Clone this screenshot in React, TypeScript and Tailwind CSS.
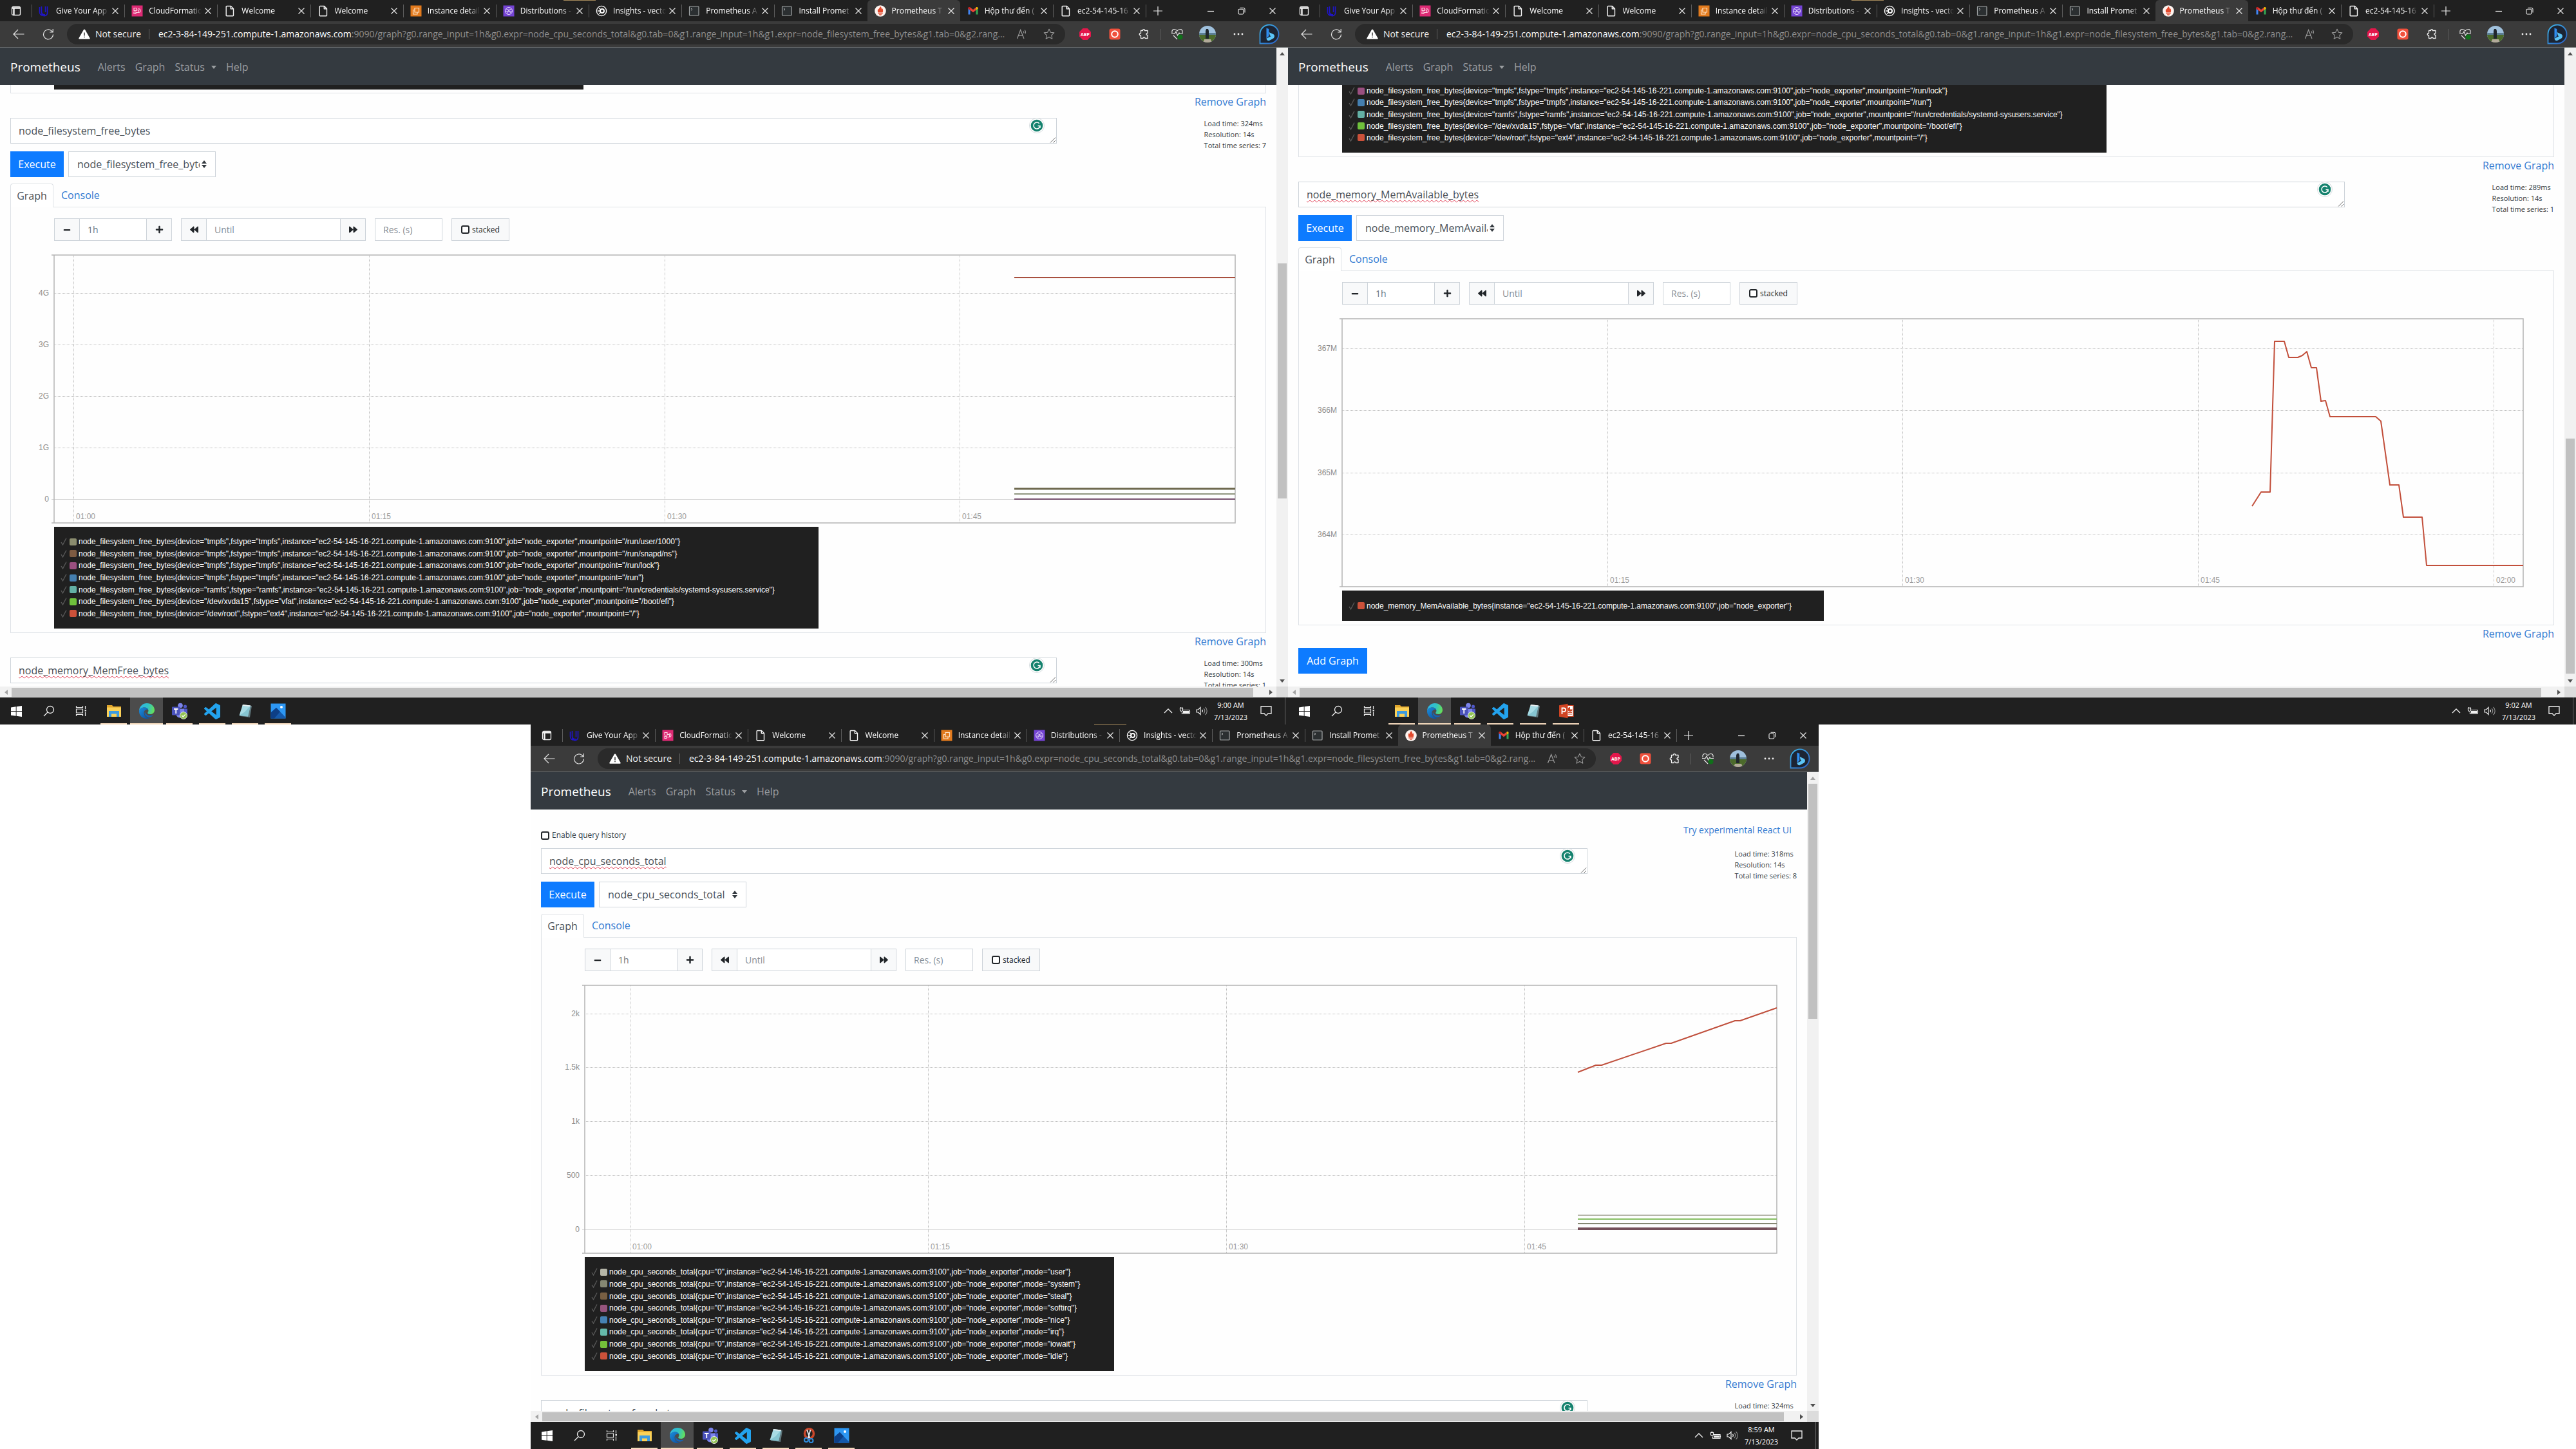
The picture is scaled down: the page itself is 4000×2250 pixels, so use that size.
import { useId } from "react";
import type { ReactNode } from "react";
import { FaBackward, FaForward, FaMinus, FaPlus } from "react-icons/fa";

/* ---------- favicons ---------- */

const UdacityIcon = () => (
  <svg viewBox="0 0 18 18" className="size-[18px]" fill="none" stroke="#2015c8" strokeWidth="1.6">
    <path d="M4.5 2v8.500a4.500 4.500 0 0 0 5.500 4.300M13.500 2v9a4.500 4.500 0 0 1-9 2M1.500 3v7.500c0 3 2 5.500 5 5.500M10.500 2v9" />
  </svg>
);

const CloudFormationIcon = () => (
  <svg viewBox="0 0 18 18" className="size-[18px]" fill="none">
    <rect x="0.500" y="0.500" width="17" height="17" fill="#dd2a74" />
    <path d="M4 4.500h4v4H4zM4 10.500h3v3H4zM8 7.500h3.500v4H7.500M10.500 5.500c2.500 0 3.500 1.500 3.500 3.500s-1.500 2.500-3 2.500" stroke="#fbd3e2" strokeWidth="1.100" />
  </svg>
);

const PageIcon = () => (
  <svg viewBox="0 0 18 18" className="size-[18px]" fill="none" stroke="#f4f4f4" strokeWidth="1.400" strokeLinejoin="round">
    <path d="M4 1.500h6.500l4 4V16a.8.8 0 0 1-.8.8H4a.8.8 0 0 1-.8-.8V2.300a.8.8 0 0 1 .8-.8zM10.300 1.700v4.100h4" />
  </svg>
);

const Ec2Icon = () => (
  <svg viewBox="0 0 18 18" className="size-[18px]" fill="none">
    <rect x="0.500" y="0.500" width="17" height="17" fill="#e27a1d" />
    <path d="M7 4.500h6.500V11H7zM7 7.500H4.500V14H11v-3" stroke="#fde3c8" strokeWidth="1.200" />
  </svg>
);

const CloudFrontIcon = () => (
  <svg viewBox="0 0 18 18" className="size-[18px]" fill="none">
    <rect x="0.500" y="0.500" width="17" height="17" fill="#7443d4" />
    <circle cx="9" cy="9" r="5.500" stroke="#e6dafb" />
    <path d="M5 6l4 1.500L13 6M9 7.500 6.500 13M9 7.500l3 5M4 10h10" stroke="#e6dafb" strokeWidth="0.900" />
  </svg>
);

const InsightsIcon = () => (
  <svg viewBox="0 0 18 18" className="size-[18px]" fill="none" stroke="#fff">
    <circle cx="9" cy="9" r="7.600" strokeWidth="1.300" />
    <circle cx="10" cy="9" r="3" strokeWidth="2" />
    <path d="M3 9h4M5 4.500l3 2.500M5 13.500 8 11" strokeWidth="1.300" />
  </svg>
);

const TerminalIcon = () => (
  <svg viewBox="0 0 18 18" className="size-[18px]" fill="none">
    <rect x="1.500" y="2" width="14.500" height="14" rx="1" fill="#2b2f31" stroke="#a5a9aa" strokeWidth="1.200" />
    <path d="M4 5l2 1.600L4 8.200" stroke="#d6d6d6" strokeWidth="0.900" />
  </svg>
);

const PrometheusIcon = () => (
  <svg viewBox="0 0 18 18" className="size-[18px]">
    <circle cx="9" cy="9" r="8.800" fill="#fdf3ef" />
    <path d="M9 1.800c1.500 2 2.400 3 2.200 4.800 1-.4 1-1 1.100-1.500 1 2 1.300 4.500.2 6.400h-7c-1.100-2-.8-4.300.2-6.200.1.800.5 1.200 1 1.500C6.500 4.800 8.500 4 9 1.800z" fill="#e2492c" />
    <path d="M5.300 12.200h7.400v1.300H5.300zM6.800 14.200h4.400c-.4 1-1.200 1.500-2.200 1.500s-1.800-.5-2.200-1.500z" fill="#e2492c" />
  </svg>
);

const GmailIcon = () => (
  <svg viewBox="0 0 18 18" className="size-[18px]">
    <path d="M1.500 4.500v10h3V8z" fill="#4285f4" />
    <path d="M16.500 4.500v10h-3V8z" fill="#34a853" />
    <path d="M1.500 4.700c0-1.600 1.700-2.200 3-1.200L9 7l4.500-3.500v4.300L9 11.200 4.500 7.800 1.500 5.600z" fill="#ea4335" />
    <path d="M13.500 3.500c1.300-1 3-.4 3 1.200v1l-3 2.100z" fill="#fbbc04" />
    <path d="M1.500 4.700c0-1.600 1.700-2.200 3-1.200v4.300L1.500 5.700z" fill="#c5221f" />
  </svg>
);

const CloseIcon = ({ className = "size-3" }: { className?: string }) => (
  <svg viewBox="0 0 12 12" className={className} fill="none" stroke="#e6e6e6" strokeWidth="1.200">
    <path d="M1.500 1.500l9 9M10.500 1.500l-9 9" />
  </svg>
);

/* ---------- browser chrome ---------- */

type TabInfo = { title: string; icon: () => ReactNode; active?: boolean; divider?: boolean };

const browserTabs: TabInfo[] = [
  { title: "Give Your App", icon: UdacityIcon, divider: true },
  { title: "CloudFormatio", icon: CloudFormationIcon, divider: true },
  { title: "Welcome", icon: PageIcon, divider: true },
  { title: "Welcome", icon: PageIcon, divider: true },
  { title: "Instance detail", icon: Ec2Icon, divider: true },
  { title: "Distributions -", icon: CloudFrontIcon, divider: true },
  { title: "Insights - vecto", icon: InsightsIcon, divider: true },
  { title: "Prometheus A", icon: TerminalIcon, divider: true },
  { title: "Install Promet", icon: TerminalIcon, divider: true },
  { title: "Prometheus T", icon: PrometheusIcon, active: true },
  { title: "Hộp thư đến (", icon: GmailIcon },
  { title: "ec2-54-145-16", icon: PageIcon, divider: true },
];

function TabStrip() {
  return (
    <div className="relative flex h-[33px] shrink-0 items-stretch bg-[#202020] text-white">
      <div className="absolute left-[43.75%] top-0 h-px w-[50px] bg-[#a68a5b]" />
      <button aria-label="Tab actions" className="flex w-[49px] items-center justify-center">
        <svg viewBox="0 0 16 16" className="size-4" fill="none" stroke="#f2f2f2" strokeWidth="1.300">
          <rect x="1.500" y="1.500" width="13" height="13" rx="2" />
          <path d="M1.500 3.500h13M4.500 4v10.500" strokeWidth="2.400" />
        </svg>
      </button>
      <div className="flex min-w-0 flex-1">
        {browserTabs.map((tab, i) => (
          <div
            key={i}
            className={`relative flex min-w-0 flex-1 items-center pl-[11px] pr-2 ${tab.active ? "rounded-t-md bg-[#3b3b3b]" : ""}`}
          >
            {tab.divider && <span className="absolute left-0 top-[7px] h-5 w-px bg-[#5c5c5c]" />}
            <span className="shrink-0">{tab.icon()}</span>
            <span className="ml-[9px] min-w-0 flex-1 overflow-hidden whitespace-nowrap text-[12px] leading-4 [mask-image:linear-gradient(to_right,black_80%,transparent)]">
              {tab.title}
            </span>
            <button aria-label="Close tab" className="ml-1 shrink-0">
              <CloseIcon />
            </button>
          </div>
        ))}
      </div>
      <div className="flex w-[221px] items-center">
        <span className="h-5 w-px bg-[#5c5c5c]" />
        <button aria-label="New tab" className="ml-2.5">
          <svg viewBox="0 0 16 16" className="size-4" stroke="#eee" strokeWidth="1.200">
            <path d="M8 1v14M1 8h14" />
          </svg>
        </button>
        <div className="ml-auto flex">
          <button aria-label="Minimize" className="flex w-12 justify-center">
            <svg viewBox="0 0 12 12" className="size-3" stroke="#eee" strokeWidth="1.200">
              <path d="M1 6.500h10" />
            </svg>
          </button>
          <button aria-label="Restore" className="flex w-12 justify-center">
            <svg viewBox="0 0 12 12" className="size-3" fill="none" stroke="#eee" strokeWidth="1.100">
              <rect x="1" y="3.200" width="7.800" height="7.800" rx="1.500" />
              <path d="M3.500 1.200h5.300a2.200 2.200 0 0 1 2.200 2.200v5" />
            </svg>
          </button>
          <button aria-label="Close window" className="flex w-12 justify-center">
            <CloseIcon />
          </button>
        </div>
      </div>
    </div>
  );
}

const cell = "flex items-center justify-center";

function AddressBar() {
  const id = useId();
  return (
    <div className="flex h-[41px] shrink-0 items-center border-b border-[#6b6f70] bg-[#3b3b3b]">
      <button aria-label="Back" className="ml-[19px]">
        <svg viewBox="0 0 20 20" className="size-5" fill="none" stroke="#e4e4e4" strokeWidth="1.200">
          <path d="M18.500 10H2M9 3 2 10l7 7" />
        </svg>
      </button>
      <button aria-label="Refresh" className="ml-[26px]">
        <svg viewBox="0 0 20 20" className="size-5" fill="none" stroke="#e4e4e4" strokeWidth="1.200">
          <path d="M17.500 10.500A7.500 7.500 0 1 1 14.500 4.500L17 7M17.200 2v5h-5" />
        </svg>
      </button>
      <div className="ml-[19px] flex h-8 min-w-0 flex-1 items-center rounded-full bg-[#2a2a2a] pl-[18px] pr-4 text-[14px] leading-5">
        <svg viewBox="0 0 18 16" className="h-4 w-[18px] shrink-0">
          <path d="M9 .5c.5 0 .8.200 1 .6l7.600 13.200c.4.700 0 1.400-.8 1.400H1.200c-.8 0-1.200-.7-.8-1.400L8 1.100c.2-.4.500-.6 1-.6z" fill="#fff" />
          <path d="M8.300 5.500h1.400v5H8.300zM8.300 11.800h1.400v1.500H8.300z" fill="#2a2a2a" />
        </svg>
        <span className="ml-2 shrink-0 text-[#f1f1f1]">Not secure</span>
        <span className="ml-3 h-4 w-px shrink-0 bg-[#606060]" />
        <span className="ml-3.5 min-w-0 flex-1 overflow-hidden whitespace-nowrap text-[#8f8f8f]">
          <span className="text-white">ec2-3-84-149-251.compute-1.amazonaws.com</span>
          :9090/graph?g0.range_input=1h&g0.expr=node_cpu_seconds_total&g0.tab=0&g1.range_input=1h&g1.expr=node_filesystem_free_bytes&g1.tab=0&g2.rang...
        </span>
        <button aria-label="Read aloud" className="ml-3 shrink-0">
          <svg viewBox="0 0 18 18" className="size-[18px]" fill="none" stroke="#9a9a9a" strokeWidth="1.200">
            <path d="M1.500 16 6.700 2.500 12 16M3.300 11.500h6.800M11 4.500a4 4 0 0 1 .8 3M13.300 2.500a6.500 6.500 0 0 1 1 5.500" />
          </svg>
        </button>
        <button aria-label="Add to favorites" className="ml-6 shrink-0">
          <svg viewBox="0 0 18 18" className="size-[18px]" fill="none" stroke="#9a9a9a" strokeWidth="1.100" strokeLinejoin="round">
            <path d="M9 1.200l2.400 5 5.400.700-4 3.800 1 5.500L9 13.600l-4.800 2.600 1-5.500-4-3.800 5.400-.7z" />
          </svg>
        </button>
      </div>
      <div className="ml-2 mr-[5px] flex items-center">
        <button aria-label="Adblock Plus" className={`${cell} w-[46px]`}>
          <span className="flex size-[18px] items-center justify-center bg-[#e3174b] text-[7px] font-bold leading-none text-white [clip-path:polygon(30%_0,70%_0,100%_30%,100%_70%,70%_100%,30%_100%,0_70%,0_30%)]">
            ABP
          </span>
        </button>
        <button aria-label="Extension" className={`${cell} w-[46px]`}>
          <svg viewBox="0 0 18 18" className="size-[18px]">
            <rect x="0.500" y="0.500" width="17" height="17" rx="3" fill="#f0503c" />
            <circle cx="9" cy="9" r="4.800" fill="none" stroke="#fff" strokeWidth="2" />
          </svg>
        </button>
        <button aria-label="Extensions" className={`${cell} w-11`}>
          <svg viewBox="0 0 18 18" className="size-[18px]" fill="none" stroke="#f0f0f0" strokeWidth="1.300" strokeLinejoin="round">
            <path d="M4.500 3.500h3c-.3-2.600 3.300-2.600 3 0h4.500v4c-2.800-.3-2.800 3.300 0 3v5h-4c.3-2-3.300-2-3 0h-3.500v-4.500c-3 .3-3-3.700 0-3.500z" />
          </svg>
        </button>
        <span className="mx-[3px] h-[17px] w-px bg-[#5c5c5c]" />
        <button aria-label="Performance" className={`${cell} w-[46px]`}>
          <svg viewBox="0 0 20 18" className="h-[18px] w-5" fill="none" stroke="#e8e8e8" strokeWidth="1.200">
            <path d="M2 7C1 3 3.500 1.500 5.500 1.500c2 0 3.500 1 4.500 2.500 1-1.500 2.500-2.500 4.500-2.500S19 3 18 7M1 8.500h5L8 5l2.500 6L13 7l1 1.500h5M4 11l6 6" />
            <circle cx="14.500" cy="13.500" r="4" fill="#10701a" stroke="none" />
          </svg>
        </button>
        <button aria-label="Profile" className={`${cell} w-12`}>
          <svg viewBox="0 0 26 26" className="size-[26px]">
            <clipPath id={`${id}a`}>
              <circle cx="13" cy="13" r="13" />
            </clipPath>
            <g clipPath={`url(#${id}a)`}>
              <rect width="26" height="26" fill="#9fc0dc" />
              <rect y="11" width="26" height="5" fill="#5c7f95" />
              <rect y="14" width="26" height="12" fill="#4c6a2b" />
              <path d="M11 5h3l1 3v12h-5V8z" fill="#20262c" />
              <path d="M8 21h10l2 5H6z" fill="#b3aa9a" />
            </g>
          </svg>
        </button>
        <button aria-label="Settings and more" className={`${cell} w-12`}>
          <svg viewBox="0 0 16 4" className="h-1 w-4" fill="#f0f0f0">
            <circle cx="2" cy="2" r="1.400" />
            <circle cx="8" cy="2" r="1.400" />
            <circle cx="14" cy="2" r="1.400" />
          </svg>
        </button>
        <button aria-label="Bing" className={`${cell} w-12`}>
          <svg viewBox="0 0 32 32" className="size-8">
            <defs>
              <linearGradient id={`${id}b`} x1="0" y1="0" x2="1" y2="1">
                <stop offset="0" stopColor="#3fb6e8" />
                <stop offset="1" stopColor="#2a5fc4" />
              </linearGradient>
            </defs>
            <path d="M16 1.500a14.500 14.500 0 1 1 0 29H1.500V16A14.500 14.500 0 0 1 16 1.500z" fill="#1c2433" stroke={`url(#${id}b)`} strokeWidth="1.800" />
            <path d="M11.500 6.500l3.800 1.600v11l-3.800 3.500z" fill="#2f8df0" />
            <path d="M15.500 13l7 3.200c2.500 2 1.500 5.300-.5 6.500l-6 3.300c-2 .8-4.500-.8-4.500-3.200l7-3.600-1.500-1z" fill="#5cc4f6" />
          </svg>
        </button>
      </div>
    </div>
  );
}

/* ---------- Prometheus page ---------- */

function NavBar() {
  return (
    <nav className="relative z-10 flex h-[58px] shrink-0 items-center bg-[#343a40] pl-4 pt-0.5 text-[16px] leading-6 text-[#9a9da0]">
      <a href="#home" className="text-[19px] text-white">Prometheus</a>
      <a href="#alerts" className="ml-[27px]">Alerts</a>
      <a href="#graph" className="ml-[15px]">Graph</a>
      <button className="ml-[15px] flex items-center">
        Status
        <span className="ml-2.5 border-x-4 border-t-[5px] border-x-transparent border-t-[#9a9da0]" />
      </button>
      <a href="#help" className="ml-[15px]">Help</a>
    </nav>
  );
}

function RemoveRow({ last }: { last?: boolean }) {
  return (
    <div className={`flex items-start justify-end pt-px ${last ? "h-[35px]" : "h-[38px]"}`}>
      <a href="#remove" className="text-[16px] leading-6 text-[#337ad1]">Remove Graph</a>
    </div>
  );
}

function QueryInput({ expr, loadTime, series, misspelled }: { expr: string; loadTime: string; series: string; misspelled?: boolean }) {
  return (
    <div className="flex h-10 items-start justify-between">
      <div className="relative h-10 w-5/6">
        <textarea
          aria-label="Expression"
          rows={1}
          spellCheck={false}
          defaultValue={expr}
          className={`block h-10 w-full resize-none overflow-hidden border border-[#ced4da] bg-white px-3 py-[7px] text-[16px] leading-6 text-[#495057] outline-none ${
            misspelled ? "underline decoration-[#e0384f] decoration-wavy decoration-1 underline-offset-2 [text-decoration-skip-ink:none]" : ""
          }`}
        />
        <svg viewBox="0 0 24 24" className="absolute right-[19px] top-0 size-6">
          <circle cx="12" cy="12" r="11.500" fill="#fff" stroke="#d5dcde" />
          <circle cx="12" cy="12" r="9.300" fill="#15826e" />
          <path d="M15.800 8.700A5 5 0 1 0 17 12.500h-3.500M17 12.300v3.500" fill="none" stroke="#fff" strokeWidth="1.600" />
        </svg>
        <svg viewBox="0 0 10 10" className="absolute bottom-px right-px size-2.5" stroke="#666" strokeWidth="1">
          <path d="M1 9.500 9 1.500M5.500 9.500 9 6" />
        </svg>
      </div>
      <div className="whitespace-nowrap text-[11px] leading-[17px] text-[#343a40]">
        <div>Load time: {loadTime}</div>
        <div>Resolution: 14s</div>
        <div>Total time series: {series}</div>
      </div>
    </div>
  );
}

const ctl = "flex h-[35px] items-center justify-center border border-[#ced4da] bg-[#f8f9fa] text-[#212529]";
const field = "h-[35px] border border-[#ced4da] bg-white px-3 text-[14px] leading-5 text-[#6c757d] placeholder-[#868e96] outline-none";

function Controls() {
  return (
    <div className="flex gap-3.5 pl-[67px]">
      <div className="flex">
        <button aria-label="Shrink range" className={`${ctl} w-10`}><FaMinus size={12} /></button>
        <input aria-label="Range" defaultValue="1h" className={`${field} -mx-px w-[105px]`} />
        <button aria-label="Grow range" className={`${ctl} w-10`}><FaPlus size={13} /></button>
      </div>
      <div className="flex">
        <button aria-label="Rewind" className={`${ctl} w-10`}><FaBackward size={13} /></button>
        <input aria-label="Until" placeholder="Until" className={`${field} -mx-px w-[209px]`} />
        <button aria-label="Forward" className={`${ctl} w-10`}><FaForward size={13} /></button>
      </div>
      <input aria-label="Resolution" placeholder="Res. (s)" className={`${field} w-[105px]`} />
      <label className={`${ctl} w-[90px] gap-1 text-[12px]`}>
        <input type="checkbox" className="size-[13px] appearance-none rounded-[3px] border-2 border-[#212529] bg-white" />
        stacked
      </label>
    </div>
  );
}

type Series = { color: string; points: string; width?: number };
type ChartData = {
  width: number;
  yTicks: [string, number][];
  xTicks: [string, number][];
  zeroLine?: boolean;
  series: Series[];
};

function Chart({ width, yTicks, xTicks, zeroLine, series }: ChartData) {
  const left = 67;
  const right = width - 1;
  return (
    <svg viewBox={`0 0 ${width} 416`} className="block h-auto w-full overflow-visible font-['Liberation_Sans',Arial,sans-serif]" fontSize="12">
      <g shapeRendering="crispEdges">
        {yTicks.map(([label, y]) => (
          <line
            key={label}
            x1={zeroLine && label === "0" ? left - 4 : left}
            x2={right}
            y1={y}
            y2={y}
            stroke={zeroLine && label === "0" ? "#d6d6d6" : "#bdbdbd"}
            strokeDasharray={zeroLine && label === "0" ? undefined : "1 1"}
          />
        ))}
        {xTicks.map(([label, x]) => (
          <line key={label} x1={x} x2={x} y1="0" y2="416" stroke="#bdbdbd" strokeDasharray="1 1" />
        ))}
      </g>
      <path d={`M${left - 4} 0H${right}V416H${left - 4}M${left} 0V416`} fill="none" stroke="#b4b4b4" strokeWidth="1.500" />
      {yTicks.map(([label, y]) => (
        <text key={label} x={left - 8} y={y + 4} textAnchor="end" fill="#8c8c8c">{label}</text>
      ))}
      {xTicks.map(([label, x]) => (
        <text key={label} x={x + 4} y="410" fill="#9b9b9b">{label}</text>
      ))}
      {series.map((s, i) => (
        <polyline key={i} points={s.points} fill="none" stroke={s.color} strokeWidth={s.width ?? 2} strokeLinejoin="round" />
      ))}
    </svg>
  );
}

type LegendRow = [string, string];

function LegendRows({ rows }: { rows: LegendRow[] }) {
  return (
    <>
      {rows.map(([color, text]) => (
        <li key={text} className="flex flex-1 items-center">
          <svg viewBox="0 0 10 14" className="h-3.5 w-2.5 shrink-0" fill="none" stroke="#5a5a5a" strokeWidth="1.300">
            <path d="M1 8l2.500 4L9 1.500" />
          </svg>
          <span className="ml-1 h-[11px] w-[11px] shrink-0 rounded-[2px]" style={{ backgroundColor: color }} />
          <span className="ml-[3px] whitespace-nowrap">{text}</span>
        </li>
      ))}
    </>
  );
}

const legendClass = "ml-[67px] flex flex-col bg-[#202020] pl-2.5 font-['Liberation_Sans',Arial,sans-serif] text-[12px] leading-[14px] text-white";

function TabsRow() {
  return (
    <div role="tablist" className="mt-2.5 flex h-[37px] items-stretch border-b border-[#dee2e6] text-[16px]">
      <button role="tab" aria-selected="true" className="-mb-px w-[67px] rounded-t border border-b-0 border-[#dee2e6] bg-white text-[#495057]">Graph</button>
      <button role="tab" aria-selected="false" className="px-3 text-[#337ad1]">Console</button>
    </div>
  );
}

function MetricSelect({ metric }: { metric: string }) {
  return (
    <div className="relative">
      <select
        aria-label="Metric"
        defaultValue={metric}
        className="h-10 w-[229px] appearance-none overflow-hidden border border-[#ced4da] bg-white pl-[13px] pr-6 text-[16px] text-[#495057] outline-none [text-overflow:clip]"
      >
        <option>{metric}</option>
      </select>
      <svg viewBox="0 0 8 12" className="pointer-events-none absolute right-3.5 top-3.5 h-3 w-2" fill="#343a40">
        <path d="M4 0l4 5H0zM4 12l4-5H0z" />
      </svg>
    </div>
  );
}

type BlockProps = {
  expr: string;
  loadTime: string;
  series: string;
  misspelled?: boolean;
  last?: boolean;
  chart: ChartData;
  chartPad: string;
  legend: LegendRow[];
  legendSize: string;
};

function GraphBlock({ expr, loadTime, series, misspelled, last, chart, chartPad, legend, legendSize }: BlockProps) {
  return (
    <section>
      <QueryInput expr={expr} loadTime={loadTime} series={series} misspelled={misspelled} />
      <div className="mt-3 flex gap-[7px]">
        <button className="h-10 w-[83px] bg-[#0d7bff] text-[16px] text-white">Execute</button>
        <MetricSelect metric={expr} />
      </div>
      <TabsRow />
      <div className="border-x border-b border-[#dee2e6] pb-1.5 pt-[17px]">
        <Controls />
        <div className={`mt-[22px] ${chartPad}`}>
          <Chart {...chart} />
        </div>
        <ul className={`${legendClass} mt-1.5 py-3.5 ${legendSize}`}>
          <LegendRows rows={legend} />
        </ul>
      </div>
      <RemoveRow last={last} />
    </section>
  );
}

/* ---------- scrollbars ---------- */

function VerticalScrollbar({ before, after }: { before: number; after: number }) {
  return (
    <div className="flex w-[18px] shrink-0 flex-col items-center bg-[#f1f1f1]">
      <div className="flex h-[18px] items-center">
        <span className={`border-x-4 border-b-[5px] border-x-transparent ${before ? "border-b-[#505050]" : "border-b-[#a3a3a3]"}`} />
      </div>
      <div style={{ flex: `${before} 0 0` }} />
      <div className="w-3.5 bg-[#c1c1c1]" style={{ flex: "365 0 0" }} />
      <div style={{ flex: `${after} 0 0` }} />
      <div className="flex h-[18px] items-center">
        <span className="border-x-4 border-t-[5px] border-x-transparent border-t-[#505050]" />
      </div>
    </div>
  );
}

function HorizontalScrollbar() {
  return (
    <div className="flex h-[17px] shrink-0 items-center bg-[#f1f1f1]">
      <div className="flex w-[18px] justify-center">
        <span className="border-y-4 border-r-[5px] border-y-transparent border-r-[#a3a3a3]" />
      </div>
      <div className="h-3.5 flex-1 bg-[#c1c1c1]" />
      <div className="flex w-9 justify-end pr-1.5">
        <span className="border-y-4 border-l-[5px] border-y-transparent border-l-[#505050]" />
      </div>
      <div className="h-full w-[18px] bg-[#dcdcdc]" />
    </div>
  );
}

/* ---------- taskbar ---------- */

const ExplorerIcon = () => (
  <svg viewBox="0 0 24 24" className="size-6">
    <path d="M1 3h8l2 2h12v4H1z" fill="#e0a52c" />
    <path d="M1 6.500h22V21H1z" fill="#fbd158" />
    <path d="M4 12h16v9h-4v-4.500H8V21H4z" fill="#3d9be0" />
  </svg>
);

function EdgeIcon() {
  const id = useId();
  return (
    <svg viewBox="0 0 26 26" className="size-[26px]">
      <defs>
        <linearGradient id={`${id}t`} x1="0" y1="0.300" x2="1" y2="0.500">
          <stop offset="0" stopColor="#2fb4e8" />
          <stop offset="0.550" stopColor="#31c3c4" />
          <stop offset="1" stopColor="#66df58" />
        </linearGradient>
        <linearGradient id={`${id}b`} x1="0" y1="0" x2="1" y2="1">
          <stop offset="0" stopColor="#1b8fdc" />
          <stop offset="1" stopColor="#0b4a9c" />
        </linearGradient>
      </defs>
      <path d="M1 12.500C1.500 5.500 7 1 13 1c7 0 12 5 12 10.500 0 4-3 6.500-6.500 6.500-2.800 0-4.300-1-4.300-2 0-.8 1.300-1.300 1.300-3.500C15.500 9.500 12.500 7.500 9 7.500c-4 0-7 2.300-8 5z" fill={`url(#${id}t)`} />
      <path d="M1 12.500c1-3 4-5 8-5 3 0 5.500 1.500 6.300 3.700C12 9.500 8.500 12 8.500 16c0 4.500 4 8 8.800 7.800-1.500.8-3 1.200-4.600 1.200C6 25 .5 19.500 1 12.500z" fill={`url(#${id}b)`} />
      <path d="M10.200 14c-2.500 5 2.500 9.500 8 8.500 2-.4 3.800-1.800 4.800-3.300-5 2.300-12.300.5-12.800-5.200z" fill="#1563b5" />
    </svg>
  );
}

const TeamsIcon = () => (
  <svg viewBox="0 0 26 26" className="size-[26px]">
    <circle cx="14" cy="4.500" r="3.800" fill="#7b83eb" />
    <circle cx="21.500" cy="6" r="2.600" fill="#5059c9" />
    <path d="M18 9.500h7v7a4 4 0 0 1-5 4z" fill="#5059c9" />
    <path d="M8 9.500h12v8a6.500 6.500 0 0 1-12 3z" fill="#7b83eb" />
    <rect x="1" y="6.500" width="12.500" height="13" rx="1" fill="#4b53bc" />
    <path d="M4 10h6.500M7.250 10v7" stroke="#fff" strokeWidth="1.800" />
    <circle cx="19" cy="20" r="5.500" fill="#92c353" stroke="#fff" strokeWidth="0.800" />
    <path d="M16.300 20l2 2 3.400-3.600" fill="none" stroke="#fff" strokeWidth="1.300" />
  </svg>
);

const CodeIcon = () => (
  <svg viewBox="0 0 24 24" className="size-[25px]" fill="#23a3ee">
    <path d="M23.150 2.587L18.210.210a1.494 1.494 0 0 0-1.705.290l-9.460 8.630-4.120-3.128a.999.999 0 0 0-1.276.057L.327 7.261A1 1 0 0 0 .326 8.740L3.899 12 .326 15.260a1 1 0 0 0 .001 1.479L1.650 17.940a.999.999 0 0 0 1.276.057l4.120-3.128 9.460 8.630a1.492 1.492 0 0 0 1.704.290l4.942-2.377A1.500 1.500 0 0 0 24 20.060V3.939a1.500 1.500 0 0 0-.850-1.352zm-5.146 14.861L10.826 12l7.178-5.448v10.896z" />
  </svg>
);

const NotepadIcon = () => (
  <svg viewBox="0 0 24 24" className="size-6">
    <path d="M8 2.500l14 1.500-3 18-15-2z" fill="#5f767c" />
    <path d="M8 2l12 1.500-4 17L2.500 19z" fill="#a8dbe4" />
    <path d="M2.500 19 16 20.500l4-17-9 10z" fill="#6fb6c4" opacity="0.600" />
    <path d="M8 2l12 1.500-.4 1.800L7.500 3.800z" fill="#e8eef0" />
  </svg>
);

const PhotosIcon = () => (
  <svg viewBox="0 0 24 24" className="size-6">
    <rect x="0.500" y="0.500" width="23" height="23" fill="#2d97f3" />
    <path d="M.5 14.500 9 7l14.500 15v1.500H.5z" fill="#1559ab" />
    <path d="M9 7 .5 14.500v9H6L15 13z" fill="#0d3f86" />
    <circle cx="17" cy="6" r="2" fill="#fff" />
  </svg>
);

const PowerPointIcon = () => (
  <svg viewBox="0 0 24 24" className="size-6">
    <path d="M12 3.500h11v17H12z" fill="#fff" stroke="#d04423" strokeWidth="1.200" />
    <path d="M15 14.500h6M15 17h6" stroke="#d04423" strokeWidth="1.200" />
    <path d="M18 6a3.500 3.500 0 1 0 3.500 3.500H18z" fill="#d04423" />
    <path d="M1 3.200 14.500.8v22.400L1 20.800z" fill="#d04423" />
    <path d="M5.500 17V7.500h2.800a2.800 2.800 0 0 1 0 5.600H5.500" fill="none" stroke="#fff" strokeWidth="1.800" />
  </svg>
);

const SnipIcon = () => (
  <svg viewBox="0 0 24 24" className="size-6" fill="none">
    <ellipse cx="12.500" cy="9" rx="7" ry="7.500" stroke="#c9472b" strokeWidth="3.500" />
    <path d="M9 3l4.500 13M14.500 3 11 16" stroke="#e9eef2" strokeWidth="1.800" />
    <circle cx="8" cy="19" r="3" stroke="#2f8fe0" strokeWidth="2" />
    <circle cx="15.500" cy="20" r="3" stroke="#2f8fe0" strokeWidth="2" />
  </svg>
);

type AppName = "explorer" | "edge" | "teams" | "code" | "notepad" | "photos" | "powerpoint" | "snip";

const appIcons: Record<AppName, () => ReactNode> = {
  explorer: () => <ExplorerIcon />,
  edge: () => <EdgeIcon />,
  teams: () => <TeamsIcon />,
  code: () => <CodeIcon />,
  notepad: () => <NotepadIcon />,
  photos: () => <PhotosIcon />,
  powerpoint: () => <PowerPointIcon />,
  snip: () => <SnipIcon />,
};

function Taskbar({ apps, time }: { apps: AppName[]; time: string }) {
  return (
    <div className="flex h-[42px] shrink-0 items-stretch bg-[#202020] text-white">
      <button aria-label="Start" className={`${cell} w-[51px]`}>
        <svg viewBox="0 0 17 17" className="size-[17px]" fill="#fff">
          <path d="M0 2.400 7.700 1.300v6.800H0zM8.600 1.200 17 0v8.100H8.600zM0 9h7.700v6.800L0 14.700zM8.600 9H17v8l-8.400-1.200z" />
        </svg>
      </button>
      <button aria-label="Search" className={`${cell} w-[50px]`}>
        <svg viewBox="0 0 18 18" className="size-[18px]" fill="none" stroke="#f0f0f0" strokeWidth="1.300">
          <circle cx="11" cy="7" r="5.500" />
          <path d="M7 11l-6 6" />
        </svg>
      </button>
      <button aria-label="Task view" className={`${cell} w-[50px]`}>
        <svg viewBox="0 0 18 18" className="size-[18px]" fill="none" stroke="#e8e8e8" strokeWidth="1.200">
          <path d="M1.500 1v2.500h10V1M1.500 17v-2.500h10V17M1.500 6h10v6h-10zM15.500 1v5M15.500 10.500V17" />
          <path d="M14.500 8.200h2.500" strokeWidth="2.400" />
        </svg>
      </button>
      {apps.map((name) => (
        <button key={name} aria-label={name} className={`${cell} relative w-[51px] ${name === "edge" ? "bg-[#4c4c4c]" : ""}`}>
          {appIcons[name]()}
          <span className={`absolute bottom-0 h-0.5 bg-[#f5dabd] ${name === "edge" ? "inset-x-0" : "inset-x-[5px]"}`} />
        </button>
      ))}
      <div className="ml-auto flex items-center">
        <button aria-label="Show hidden icons">
          <svg viewBox="0 0 14 8" className="h-2 w-3.5" fill="none" stroke="#f0f0f0" strokeWidth="1.300">
            <path d="M1 7l6-6 6 6" />
          </svg>
        </button>
        <svg viewBox="0 0 18 12" className="ml-2.5 h-3 w-[18px]" fill="none" stroke="#f0f0f0" strokeWidth="1.200">
          <path d="M6 4.500h10v6H4.500V7.500M1.500 1.500h4v3a2 2 0 0 1-4 0zM2.500 0v1.500M4.500 0v1.500M16.500 6.500v2" />
          <path d="M6 6h9v3.500H6z" fill="#f0f0f0" stroke="none" />
        </svg>
        <svg viewBox="0 0 18 14" className="ml-2 h-3.5 w-[18px]" fill="none" stroke="#f0f0f0" strokeWidth="1.200">
          <path d="M1 5h2.500L7 1.500v11L3.500 9H1zM9.500 5a3 3 0 0 1 0 4" />
          <path d="M12 3a5.500 5.500 0 0 1 0 8M14.500 1a8 8 0 0 1 0 12" stroke="#8a8a8a" />
        </svg>
        <div className="w-[72px] text-center text-[11px] leading-[19px]">
          <div>{time}</div>
          <div>7/13/2023</div>
        </div>
        <button aria-label="Notifications" className="ml-2.5 mr-5">
          <svg viewBox="0 0 18 18" className="size-[18px]" fill="none" stroke="#f0f0f0" strokeWidth="1.300">
            <path d="M1 2h16v11h-5l-3 3-3-3H1z" />
          </svg>
        </button>
        <span className="mr-1 h-full w-px bg-[#6a6a6a]" />
      </div>
    </div>
  );
}

/* ---------- window ---------- */

type WindowProps = { apps: AppName[]; time: string; before: number; after: number; children: ReactNode };

function BrowserWindow({ apps, time, before, after, children }: WindowProps) {
  return (
    <div className="flex aspect-video w-full flex-col overflow-hidden bg-white">
      <TabStrip />
      <AddressBar />
      <div className="flex min-h-0 flex-1">
        <div className="flex min-w-0 flex-1 flex-col overflow-hidden">
          <NavBar />
          <main className="min-h-0 flex-1 overflow-hidden bg-[#fefefe] px-4">{children}</main>
        </div>
        <VerticalScrollbar before={before} after={after} />
      </div>
      <HorizontalScrollbar />
      <Taskbar apps={apps} time={time} />
    </div>
  );
}

/* ---------- data ---------- */

const instance = 'instance="ec2-54-145-16-221.compute-1.amazonaws.com:9100",job="node_exporter"';
const fs = (device: string, type: string, mount: string) =>
  `node_filesystem_free_bytes{device="${device}",fstype="${type}",${instance},mountpoint="${mount}"}`;

const filesystemLegend: LegendRow[] = [
  ["#8b8d6f", fs("tmpfs", "tmpfs", "/run/user/1000")],
  ["#7d5b42", fs("tmpfs", "tmpfs", "/run/snapd/ns")],
  ["#9a4f80", fs("tmpfs", "tmpfs", "/run/lock")],
  ["#447fb0", fs("tmpfs", "tmpfs", "/run")],
  ["#63b0a5", fs("ramfs", "ramfs", "/run/credentials/systemd-sysusers.service")],
  ["#6fc13c", fs("/dev/xvda15", "vfat", "/boot/efi")],
  ["#cb513a", fs("/dev/root", "ext4", "/")],
];

const cpu = (mode: string) => `node_cpu_seconds_total{cpu="0",${instance},mode="${mode}"}`;

const cpuLegend: LegendRow[] = [
  ["#b5b6a9", cpu("user")],
  ["#858772", cpu("system")],
  ["#785f43", cpu("steal")],
  ["#96557e", cpu("softirq")],
  ["#4682b4", cpu("nice")],
  ["#65b9ac", cpu("irq")],
  ["#73c03a", cpu("iowait")],
  ["#cb513a", cpu("idle")],
];

const filesystemChart: ChartData = {
  width: 1902,
  zeroLine: true,
  yTicks: [["4G", 59], ["3G", 139], ["2G", 219], ["1G", 299], ["0", 379]],
  xTicks: [["01:00", 97], ["01:15", 556], ["01:30", 1015], ["01:45", 1473]],
  series: [
    { color: "#a8503f", points: "1558,35 1901,35" },
    { color: "#6f6a50", points: "1558,363 1901,363", width: 3 },
    { color: "#8f957f", points: "1558,371 1901,371" },
    { color: "#76506e", points: "1558,379 1901,379" },
  ],
};

const memoryChart: ChartData = {
  width: 1902,
  yTicks: [["367M", 46], ["366M", 142], ["365M", 239], ["364M", 335]],
  xTicks: [["01:15", 479], ["01:30", 937], ["01:45", 1396], ["02:00", 1855]],
  series: [
    {
      color: "#c24f3b",
      points:
        "1480,291 1494,269 1508,269 1515,35 1530,35 1537,60 1551,60 1558,57 1565,51 1572,76 1580,76 1587,128 1594,127 1601,152 1672,152 1680,159 1694,258 1708,258 1715,308 1744,308 1751,383 1901,383",
    },
  ],
};

const cpuChart: ChartData = {
  width: 1919,
  zeroLine: true,
  yTicks: [["2k", 44], ["1.5k", 127], ["1k", 211], ["500", 295], ["0", 379]],
  xTicks: [["01:00", 137], ["01:15", 600], ["01:30", 1063], ["01:45", 1526]],
  series: [
    { color: "#c0503d", points: "1609,135 1637,124 1646,124 1746,90 1754,90 1853,55 1861,55 1918,35" },
    { color: "#b5b6a9", points: "1609,357 1918,357" },
    { color: "#86bf62", points: "1609,363 1918,363" },
    { color: "#858772", points: "1609,370 1918,370" },
    { color: "#75505a", points: "1609,378 1918,378", width: 4 },
  ],
};

/* ---------- app ---------- */

export default function App() {
  return (
    <div className="grid min-h-screen grid-cols-2 content-start bg-white font-['Open_Sans','Noto_Sans',sans-serif]">
      <BrowserWindow apps={["explorer", "edge", "teams", "code", "notepad", "photos"]} time="9:00 AM" before={317} after={274}>
        <div className="h-[13px] border-x border-b border-[#dee2e6]">
          <div className="ml-[67px] h-[7px] w-[822px] bg-[#202020]" />
        </div>
        <RemoveRow />
        <GraphBlock
          expr="node_filesystem_free_bytes"
          loadTime="324ms"
          series="7"
          chart={filesystemChart}
          chartPad="pr-[46px]"
          legend={filesystemLegend}
          legendSize="h-[158px] w-[1187px]"
        />
        <QueryInput expr="node_memory_MemFree_bytes" loadTime="300ms" series="1" misspelled />
      </BrowserWindow>

      <BrowserWindow apps={["explorer", "edge", "teams", "code", "notepad", "powerpoint"]} time="9:02 AM" before={589} after={2}>
        <div className="border-x border-b border-[#dee2e6] pb-1.5">
          <ul className={`${legendClass} h-[105px] w-[1187px] pb-3.5`}>
            <LegendRows rows={filesystemLegend.slice(2)} />
          </ul>
        </div>
        <RemoveRow />
        <GraphBlock
          expr="node_memory_MemAvailable_bytes"
          loadTime="289ms"
          series="1"
          misspelled
          last
          chart={memoryChart}
          chartPad="pr-[46px]"
          legend={[["#cb513a", `node_memory_MemAvailable_bytes{${instance}}`]]}
          legendSize="h-[47px] w-[748px]"
        />
        <button className="h-10 w-[107px] bg-[#0d7bff] text-[16px] text-white">Add Graph</button>
      </BrowserWindow>

      <div className="col-span-2 ml-[20.6%] w-1/2">
        <BrowserWindow apps={["explorer", "edge", "teams", "code", "notepad", "snip", "photos"]} time="8:59 AM" before={0} after={591}>
          <div className="flex h-[60px] items-end justify-between">
            <label className="flex items-center gap-1 pb-3 text-[12px] leading-4 text-[#343a40]">
              <input type="checkbox" className="size-[13px] appearance-none rounded-[3px] border-2 border-[#212529] bg-white" />
              Enable query history
            </label>
            <a href="#react" className="pb-[18px] pr-2 text-[14px] leading-5 text-[#337ad1]">Try experimental React UI</a>
          </div>
          <GraphBlock
            expr="node_cpu_seconds_total"
            loadTime="318ms"
            series="8"
            misspelled
            chart={cpuChart}
            chartPad="pr-[29px]"
            legend={cpuLegend}
            legendSize="h-[177px] w-[822px]"
          />
          <QueryInput expr="node_filesystem_free_bytes" loadTime="324ms" series="7" />
        </BrowserWindow>
      </div>
    </div>
  );
}
